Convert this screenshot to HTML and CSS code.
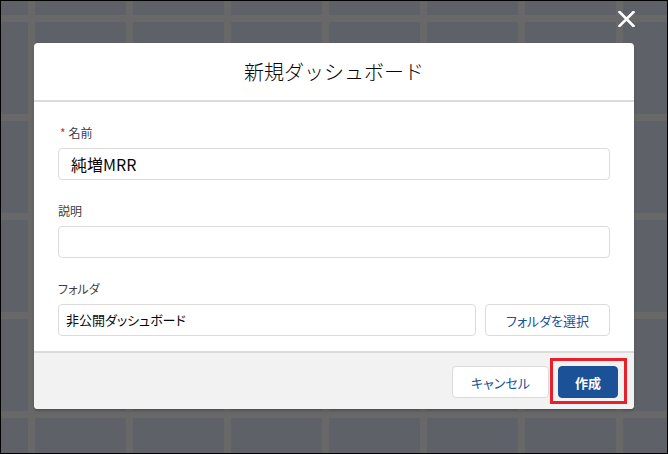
FILE: index.html
```html
<!DOCTYPE html>
<html lang="ja">
<head>
    <meta charset="UTF-8">
    <meta name="viewport" content="width=device-width, initial-scale=1.0">
    <title>新規ダッシュボード</title>
    <link rel="stylesheet" href="styles.css">
</head>
<body>
    <div class="screen">
        <div class="close-row">
            <button class="close-button" title="閉じる">
                <svg width="17" height="16" viewBox="0 0 17 16">
                    <path d="M1.5 1 L15.5 15 M15.5 1 L1.5 15" stroke="#fff" stroke-width="2.6" stroke-linecap="square" fill="none"/>
                </svg>
            </button>
        </div>

        <div class="modal">
            <div class="modal-header">
                <h2>新規ダッシュボード</h2>
            </div>

            <div class="modal-body">
                <div class="field">
                    <label class="field-label"><span class="required">*</span>名前</label>
                    <div class="input input-large">純増MRR</div>
                </div>

                <div class="field">
                    <label class="field-label">説明</label>
                    <div class="input"></div>
                </div>

                <div class="field">
                    <label class="field-label">フォルダ</label>
                    <div class="folder-row">
                        <div class="input folder-input">非公開ダッシュボード</div>
                        <button class="btn btn-neutral folder-button">フォルダを選択</button>
                    </div>
                </div>
            </div>

            <div class="modal-footer">
                <button class="btn btn-neutral cancel-button">キャンセル</button>
                <span class="highlight">
                    <button class="btn btn-brand create-button">作成</button>
                </span>
            </div>
        </div>
    </div>
</body>
</html>
```

FILE: styles.css
```css
html, body {
    margin: 0;
    padding: 0;
}
body {
    font-family: "Noto Sans CJK JP", "Liberation Sans", sans-serif;
    color: #080707;
}
.screen {
    width: 668px;
    height: 454px;
    box-sizing: border-box;
    border: 1px solid #000;
    background-color: #5e6167;
    background-image:
        linear-gradient(to right, transparent 27px, #696869 27px, #696869 34px, transparent 34px),
        linear-gradient(to bottom, transparent 14px, #696869 14px, #696869 21px, transparent 21px);
    background-size: 98px 100%, 100% 99px;
    overflow: hidden;
}
.close-row {
    display: flex;
    justify-content: flex-end;
    padding: 10px 32px 0 0;
    height: 17px;
}
.close-button {
    border: none;
    background: none;
    padding: 0;
    width: 17px;
    height: 16px;
    cursor: pointer;
}
.close-button svg {
    display: block;
}
.modal {
    width: 600px;
    margin: 15px 0 0 33px;
    background: #fff;
    border-radius: 4px;
    box-shadow: 0 2px 3px rgba(0, 0, 0, 0.16);
    overflow: hidden;
}
.modal-header {
    height: 57px;
    border-bottom: 2px solid #dddbda;
    display: flex;
    align-items: center;
    justify-content: center;
}
.modal-header h2 {
    margin: 0;
    font-size: 20px;
    font-weight: 300;
    color: #080707;
}
.modal-body {
    padding: 21px 24px 15px;
    display: flex;
    flex-direction: column;
    gap: 21px;
}
.field {
    display: flex;
    flex-direction: column;
    gap: 5px;
}
.field-label {
    font-size: 12px;
    line-height: 20px;
    height: 20px;
    color: #3e3e3c;
    font-feature-settings: "palt";
}
.required {
    color: #c23934;
    margin: 0 3px 0 2px;
}
.input {
    height: 32px;
    box-sizing: border-box;
    border: 1px solid #dddbda;
    border-radius: 4px;
    padding: 0 12px;
    font-size: 13px;
    line-height: 30px;
    color: #080707;
    font-feature-settings: "palt";
}
.input-large {
    font-size: 16px;
}
.folder-row {
    display: flex;
    gap: 9px;
}
.folder-input {
    flex: 1;
    padding-left: 7px;
}
.btn {
    height: 32px;
    box-sizing: border-box;
    border-radius: 4px;
    font-family: inherit;
    font-size: 13px;
    padding: 0;
    cursor: pointer;
    font-feature-settings: "palt";
}
.btn-neutral {
    background: #fff;
    border: 1px solid #dddbda;
    color: #1b5297;
}
.btn-brand {
    background: #1b5297;
    border: 1px solid #1b5297;
    color: #fff;
    font-weight: 700;
}
.folder-button {
    width: 125px;
}
.modal-footer {
    height: 58px;
    box-sizing: border-box;
    background: #f3f2f2;
    border-top: 2px solid #dddbda;
    display: flex;
    justify-content: flex-end;
    align-items: flex-start;
    gap: 9px;
    padding: 13px 16px 0 0;
}
.cancel-button {
    width: 97px;
}
.highlight {
    position: relative;
    display: block;
    height: 32px;
}
.highlight::after {
    content: "";
    position: absolute;
    top: -8px;
    left: -8px;
    right: -9px;
    bottom: -6px;
    border: 3px solid #e8202a;
    pointer-events: none;
}
.create-button {
    display: block;
    width: 60px;
}
```
